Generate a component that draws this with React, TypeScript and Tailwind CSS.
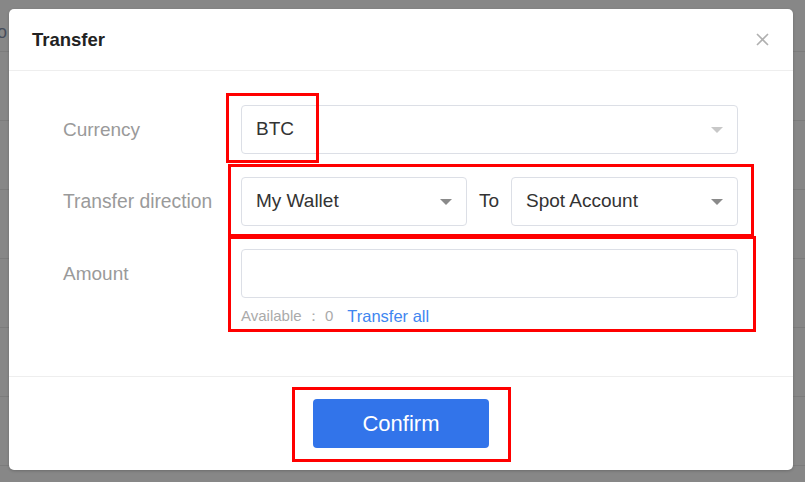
import React from "react";

function Caret({ light }: { light?: boolean }) {
  return (
    <svg width="12" height="6" viewBox="0 0 12 6" className="shrink-0">
      <path d="M0 0 L12 0 L6 6 Z" fill={light ? "#c8c8c8" : "#8a8a8a"} />
    </svg>
  );
}

function Select({ value, light, className }: { value: string; light?: boolean; className?: string }) {
  return (
    <div
      className={
        "h-[49px] rounded-[4px] border border-[#dcdfe6] bg-white flex items-center justify-between pl-[14px] pr-[14px] " +
        (className ?? "")
      }
    >
      <span className="text-[19px] text-[#333]">{value}</span>
      <Caret light={light} />
    </div>
  );
}

export default function App() {
  const rows = [0, 1, 2, 3, 4, 5];
  return (
    <div
      className="relative w-[805px] h-[482px] overflow-hidden bg-[#878787]"
      style={{ fontFamily: '"Liberation Sans", Arial, sans-serif' }}
    >
      {/* background page behind overlay */}
      <div className="flex flex-col">
        <div className="h-[52px] border-b border-[#7c7c7c] flex items-start pt-[21px]">
          <span className="text-[18px] leading-[22px] text-[#464d5c] -ml-[12px]">To</span>
        </div>
        {rows.map((r) => (
          <div key={r} className="h-[69px] border-b border-[#7c7c7c]" />
        ))}
      </div>

      {/* modal */}
      <div className="absolute left-[9px] top-[9px] w-[784px] h-[461px] bg-white rounded-[5px] shadow-[0_1px_3px_rgba(0,0,0,0.2)] flex flex-col">
        <div className="h-[62px] border-b border-[#eeeeee] flex items-center justify-between pl-[23px] pr-[24px] shrink-0">
          <span className="text-[18.5px] font-bold text-[#222]">Transfer</span>
          <svg width="13" height="13" viewBox="0 0 13 13">
            <path d="M1 1 L12 12 M12 1 L1 12" stroke="#b0b0b0" strokeWidth="1.6" />
          </svg>
        </div>

        <div className="flex-1 flex flex-col pt-[34px] pl-[54px] pr-[55px] gap-[23px]">
          <div className="flex items-center">
            <div className="w-[178px] text-[19px] text-[#9a9a9a] pt-[2px]">Currency</div>
            <Select value="BTC" light className="flex-1" />
          </div>
          <div className="flex items-center">
            <div className="w-[178px] text-[19.3px] text-[#9a9a9a] pt-[2px]">Transfer direction</div>
            <Select value="My Wallet" className="w-[226px]" />
            <span className="w-[44px] text-center text-[19px] text-[#333]">To</span>
            <Select value="Spot Account" className="flex-1" />
          </div>
          <div className="flex items-start">
            <div className="w-[178px] text-[19px] text-[#9a9a9a] h-[49px] flex items-center pt-[2px]">Amount</div>
            <div className="flex-1 flex flex-col">
              <div className="h-[49px] rounded-[4px] border border-[#dcdfe6] bg-white" />
              <div className="flex items-center mt-[8px] h-[20px]">
                <span className="text-[15px] text-[#aaaaaa]">Available ： 0</span>
                <span className="text-[16.5px] text-[#3f86f0] ml-[14px]">Transfer all</span>
              </div>
            </div>
          </div>
        </div>

        <div className="h-[94px] border-t border-[#eeeeee] flex justify-center pt-[22px] shrink-0">
          <button className="w-[176px] h-[49px] rounded-[4px] bg-[#3274ea] text-white text-[22px]">
            Confirm
          </button>
        </div>
      </div>

      {/* red annotation boxes */}
      <div className="absolute left-[226px] top-[93px] w-[93px] h-[70px] border-[3px] border-[#ff0000]" />
      <div className="absolute left-[228px] top-[164px] w-[526px] h-[73px] border-[3px] border-[#ff0000]" />
      <div className="absolute left-[228px] top-[236px] w-[528px] h-[96px] border-[3px] border-[#ff0000]" />
      <div className="absolute left-[292px] top-[387px] w-[219px] h-[75px] border-[3px] border-[#ff0000]" />
    </div>
  );
}
